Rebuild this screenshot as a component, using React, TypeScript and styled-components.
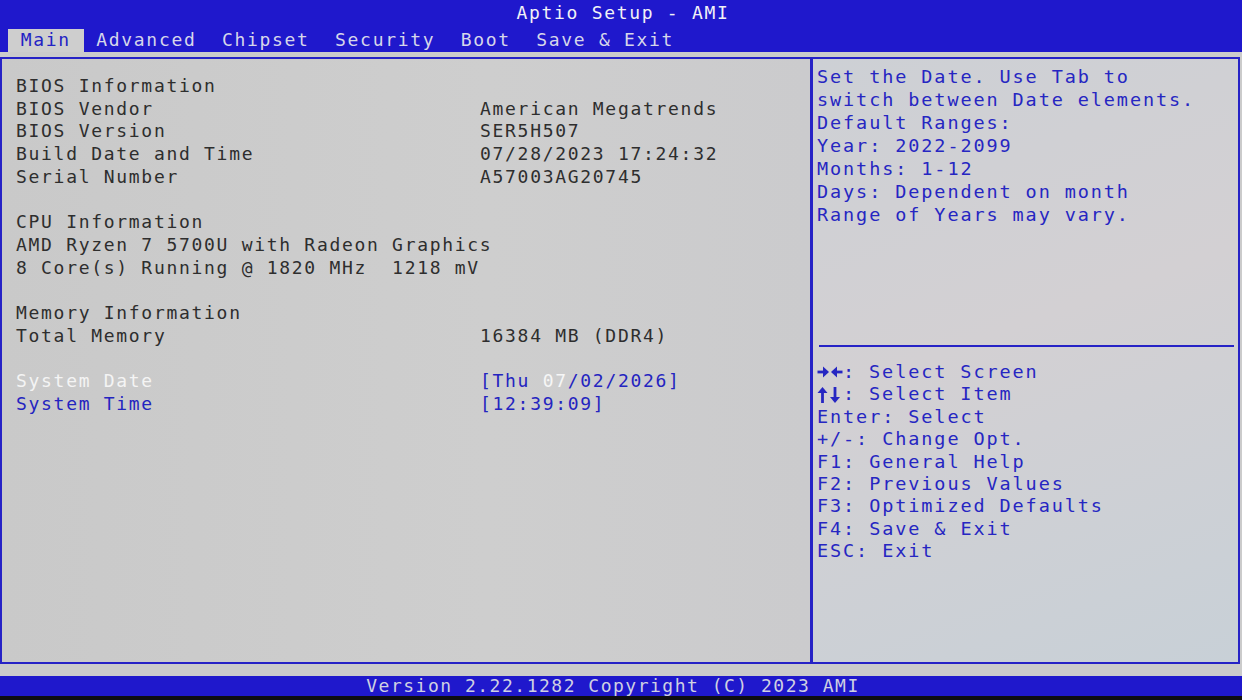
import React from 'react';
import styled, { createGlobalStyle } from 'styled-components';

const BLUE = '#1f18cc';
const LINE = '#2622c6';
const INK = '#2e2e2e';
const HELP = '#2626c2';
const PAPER = '#cbcbcb';

const GlobalStyle = createGlobalStyle`
	html, body {
		margin: 0;
		padding: 0;
		background: #0d0d12;
	}
	body {
		font-family: 'DejaVu Sans Mono', 'Liberation Mono', monospace;
		font-size: 18px;
		letter-spacing: 1.7px;
	}
`;

const Screen = styled.div`
	width: 1242px;
	height: 696px;
	display: flex;
	flex-direction: column;
	background: ${PAPER};
	overflow: hidden;
`;

const Header = styled.header`
	height: 52px;
	background: ${BLUE};
	display: flex;
	flex-direction: column;
`;

const Title = styled.div`
	height: 25px;
	line-height: 25px;
	text-align: center;
	color: #f1f1f6;
	padding-left: 4px;
`;

const TabRow = styled.nav`
	height: 27px;
	display: flex;
	align-items: flex-end;
	padding-left: 8px;
`;

const Tab = styled.span<{ $active?: boolean }>`
	height: 23px;
	line-height: 22px;
	padding: 0 12.7px;
	white-space: pre;
	background: ${(p) => (p.$active ? '#cecece' : 'transparent')};
	color: ${(p) => (p.$active ? '#2323c4' : '#d6d6ea')};
`;

const Gap = styled.div<{ $h: number }>`
	height: ${(p) => p.$h}px;
	flex: none;
`;

const Frame = styled.main`
	flex: 1;
	display: flex;
	width: 1240px;
	border: 2px solid ${LINE};
	box-sizing: border-box;
`;

const InfoPanel = styled.section`
	width: 808px;
	flex: none;
	padding: 16px 0 0 14px;
	box-sizing: border-box;
	background: linear-gradient(90deg, #c9c9c9 0%, #cecece 60%, #cbcbcd 100%);
`;

const HelpPanel = styled.aside`
	flex: 1;
	display: flex;
	flex-direction: column;
	border-left: 3px solid ${LINE};
	font-size: 18.5px;
	letter-spacing: 1.9px;
	color: ${HELP};
	background: linear-gradient(160deg, #cdd0d5 0%, #d3d0d3 45%, #c8d0d7 100%);
`;

const Row = styled.div`
	display: flex;
	height: 22.7px;
	line-height: 22.7px;
	white-space: pre;
`;

const Label = styled.span<{ $tone?: 'plain' | 'focus' | 'link' }>`
	flex: none;
	min-width: 464px;
	color: ${(p) => (p.$tone === 'focus' ? '#f4f4f4' : p.$tone === 'link' ? '#2424c0' : INK)};
`;

const Value = styled.span<{ $blue?: boolean }>`
	color: ${(p) => (p.$blue ? '#2424c0' : INK)};
`;

const Selected = styled.span`
	color: #f6f6f6;
`;

const HelpText = styled.div`
	height: 286px;
	flex: none;
	padding: 6px 0 0 4px;
	box-sizing: border-box;
`;

const HelpLine = styled.div<{ $lh: number }>`
	display: flex;
	align-items: center;
	height: ${(p) => p.$lh}px;
	line-height: ${(p) => p.$lh}px;
	white-space: pre;
`;

const Rule = styled.hr`
	margin: 0 4px 0 6px;
	border: none;
	height: 2px;
	background: ${LINE};
`;

const Keys = styled.div`
	padding: 14px 0 0 4px;
`;

const ArrowPair = styled.svg`
	width: 26px;
	height: 16px;
	flex: none;
`;

const Footer = styled.footer`
	height: 20px;
	line-height: 20px;
	background: ${BLUE};
	color: #cfd0e2;
	text-align: center;
	letter-spacing: 1.5px;
	padding-right: 16px;
`;

// little filled-head arrows used by the key legend
function SideArrows() {
	return (
		<ArrowPair viewBox='0 0 26 16' fill={HELP} stroke={HELP}>
			<line x1='0.5' y1='8' x2='7' y2='8' strokeWidth='2.8' />
			<polygon points='6,2.5 12,8 6,13.5' stroke='none' />
			<line x1='19' y1='8' x2='25.5' y2='8' strokeWidth='2.8' />
			<polygon points='20,2.5 14,8 20,13.5' stroke='none' />
		</ArrowPair>
	);
}

function UpDownArrows() {
	return (
		<ArrowPair viewBox='0 0 26 16' fill={HELP} stroke={HELP}>
			<line x1='5.5' y1='5' x2='5.5' y2='16' strokeWidth='2.8' />
			<polygon points='0.5,6 5.5,0 10.5,6' stroke='none' />
			<line x1='18' y1='0' x2='18' y2='11' strokeWidth='2.8' />
			<polygon points='13,10 18,16 23,10' stroke='none' />
		</ArrowPair>
	);
}

const tabs = ['Main', 'Advanced', 'Chipset', 'Security', 'Boot', 'Save & Exit'];

const helpLines = [
	'Set the Date. Use Tab to',
	'switch between Date elements.',
	'Default Ranges:',
	'Year: 2022-2099',
	'Months: 1-12',
	'Days: Dependent on month',
	'Range of Years may vary.'
];

const keyLines = [
	'Enter: Select',
	'+/-: Change Opt.',
	'F1: General Help',
	'F2: Previous Values',
	'F3: Optimized Defaults',
	'F4: Save & Exit',
	'ESC: Exit'
];

function App() {
	return (
		<>
			<GlobalStyle />
			<Screen>
				<Header>
					<Title>Aptio Setup - AMI</Title>
					<TabRow>
						{tabs.map((t, i) => (
							<Tab key={t} $active={i === 0}>
								{t}
							</Tab>
						))}
					</TabRow>
				</Header>
				<Gap $h={5} />
				<Frame>
					<InfoPanel>
						<Row><Label>BIOS Information</Label></Row>
						<Row><Label>BIOS Vendor</Label><Value>American Megatrends</Value></Row>
						<Row><Label>BIOS Version</Label><Value>SER5H507</Value></Row>
						<Row><Label>Build Date and Time</Label><Value>07/28/2023 17:24:32</Value></Row>
						<Row><Label>Serial Number</Label><Value>A57003AG20745</Value></Row>
						<Row />
						<Row><Label>CPU Information</Label></Row>
						<Row><Label>AMD Ryzen 7 5700U with Radeon Graphics</Label></Row>
						<Row><Label>8 Core(s) Running @ 1820 MHz  1218 mV</Label></Row>
						<Row />
						<Row><Label>Memory Information</Label></Row>
						<Row><Label>Total Memory</Label><Value>16384 MB (DDR4)</Value></Row>
						<Row />
						<Row>
							<Label $tone='focus'>System Date</Label>
							<Value $blue>
								[Thu <Selected>07</Selected>/02/2026]
							</Value>
						</Row>
						<Row>
							<Label $tone='link'>System Time</Label>
							<Value $blue>[12:39:09]</Value>
						</Row>
					</InfoPanel>
					<HelpPanel>
						<HelpText>
							{helpLines.map((l) => (
								<HelpLine key={l} $lh={23}>{l}</HelpLine>
							))}
						</HelpText>
						<Rule />
						<Keys>
							<HelpLine $lh={22.4}>
								<SideArrows />: Select Screen
							</HelpLine>
							<HelpLine $lh={22.4}>
								<UpDownArrows />: Select Item
							</HelpLine>
							{keyLines.map((l) => (
								<HelpLine key={l} $lh={22.4}>{l}</HelpLine>
							))}
						</Keys>
					</HelpPanel>
				</Frame>
				<Gap $h={12} />
				<Footer>Version 2.22.1282 Copyright (C) 2023 AMI</Footer>
			</Screen>
		</>
	);
}

export default App;
